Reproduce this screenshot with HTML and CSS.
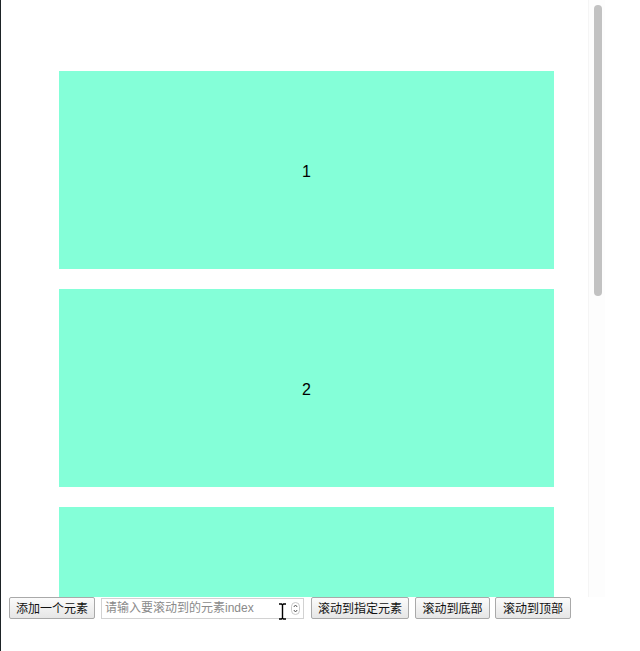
FILE: index.html
```html
<!DOCTYPE html>
<html lang="zh">
<head>
<meta charset="utf-8">
<title>滚动列表</title>
<link rel="stylesheet" href="styles.css">
</head>
<body>
<div class="page">
  <div class="scroller">
    <div class="list">
      <div class="item">1</div>
      <div class="item">2</div>
      <div class="item">3</div>
    </div>
    <div class="scrollbar"><div class="thumb"></div></div>
  </div>
  <div class="controls">
    <button class="btn btn-add">添加一个元素</button>
    <div class="field">
      <input class="field-input" type="text" placeholder="请输入要滚动到的元素index">
      <svg class="spin" width="9" height="13" viewBox="0 0 9 13" aria-hidden="true">
        <rect x="0.5" y="0.5" width="8" height="12" rx="4" fill="#fff" stroke="#c8c8c8"/>
        <path d="M2.8 5 L4.5 3 L6.2 5" fill="none" stroke="#555" stroke-width="1"/>
        <path d="M2.8 8 L4.5 10 L6.2 8" fill="none" stroke="#555" stroke-width="1"/>
      </svg>
      <svg class="cursor" width="9" height="17" viewBox="0 0 9 17" aria-hidden="true">
        <path d="M1 1 H3.5 L4.5 2 L5.5 1 H8 M4.5 2 V15 M1 16 H3.5 L4.5 15 L5.5 16 H8" fill="none" stroke="#000" stroke-width="1.4"/>
      </svg>
    </div>
    <button class="btn btn-target">滚动到指定元素</button>
    <button class="btn btn-bottom">滚动到底部</button>
    <button class="btn btn-top">滚动到顶部</button>
  </div>
</div>
</body>
</html>
```

FILE: styles.css
```css
html, body {
  margin: 0;
  padding: 0;
  background: #ffffff;
}

body {
  font-family: "Liberation Sans", "Noto Sans CJK SC", sans-serif;
  width: 640px;
  height: 651px;
  overflow: hidden;
}

.page {
  display: flex;
  flex-direction: column;
  height: 651px;
  border-left: 1px solid #1d2326;
  box-sizing: border-box;
}

.scroller {
  position: relative;
  height: 597px;
  overflow: hidden;
}

.list {
  display: flex;
  flex-direction: column;
  gap: 20px;
  padding: 71px 0 0 58px;
}

.item {
  width: 495px;
  height: 198px;
  flex: none;
  box-sizing: border-box;
  padding-top: 4px;
  background: #84ffd8;
  display: flex;
  align-items: center;
  justify-content: center;
  font-family: "Liberation Sans", sans-serif;
  font-size: 16px;
  color: #000;
}

.scrollbar {
  position: absolute;
  top: 0;
  left: 587px;
  width: 16px;
  height: 597px;
  background: #fdfdfd;
  border-left: 1px solid #f5f5f5;
}

.thumb {
  position: absolute;
  top: 5px;
  left: 5px;
  width: 8px;
  height: 291px;
  border-radius: 4px;
  background: #c2c2c2;
}

.controls {
  display: flex;
  align-items: center;
  padding: 0 0 0 8px;
}

.btn {
  flex: none;
  height: 22px;
  padding: 0;
  margin: 0;
  border: 1px solid #a9a9a9;
  border-radius: 2px;
  background: linear-gradient(#fbfbfb, #e6e6e6);
  font-family: "Noto Sans CJK SC", sans-serif;
  font-size: 12px;
  line-height: 20px;
  color: #111;
  white-space: nowrap;
  text-align: center;
  box-sizing: border-box;
}

.btn-add { width: 86px; }
.btn-target { width: 98px; margin-left: 7px; }
.btn-bottom { width: 75px; margin-left: 6px; }
.btn-top { width: 76px; margin-left: 5px; }

.field {
  position: relative;
  flex: none;
  width: 203px;
  height: 21px;
  margin-left: 6px;
}

.field-input {
  display: block;
  width: 100%;
  height: 21px;
  margin: 0;
  border: 1px solid #d2d2d2;
  outline: none;
  padding: 0 16px 0 3px;
  box-sizing: border-box;
  font-family: "Liberation Sans", "Noto Sans CJK SC", sans-serif;
  font-size: 12px;
  background: #fff;
}

.field-input::placeholder {
  color: #8a8a8a;
}

.spin {
  position: absolute;
  right: 4px;
  top: 4px;
}

.cursor {
  position: absolute;
  left: 177px;
  top: 5px;
}
```
